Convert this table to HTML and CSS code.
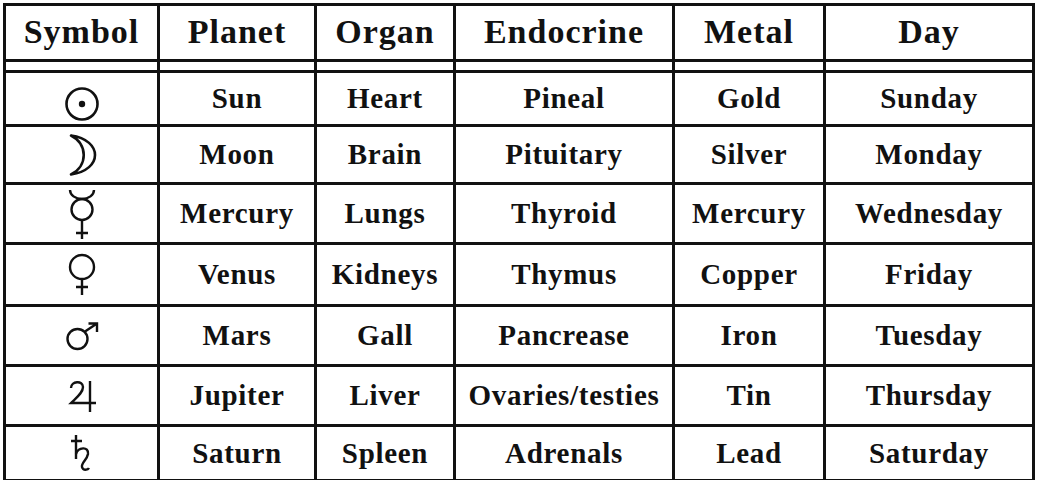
FILE: index.html
```html
<!DOCTYPE html>
<html>
<head>
<meta charset="utf-8">
<link rel="stylesheet" href="styles.css">
</head>
<body>
<table class="grid">
  <colgroup>
    <col class="c1"><col class="c2"><col class="c3"><col class="c4"><col class="c5"><col class="c6">
  </colgroup>
  <thead>
    <tr class="head">
      <th>Symbol</th><th>Planet</th><th>Organ</th><th>Endocrine</th><th>Metal</th><th>Day</th>
    </tr>
    <tr class="gap"><td></td><td></td><td></td><td></td><td></td><td></td></tr>
  </thead>
  <tbody>
    <tr class="r1">
      <td class="sym"><svg class="i-sun" width="36" height="36" viewBox="0 0 36 36"><circle cx="18" cy="18" r="15.5" fill="none" stroke="#111" stroke-width="2.6"/><circle cx="18" cy="18" r="3.2" fill="#111"/></svg></td>
      <td>Sun</td><td>Heart</td><td>Pineal</td><td>Gold</td><td>Sunday</td>
    </tr>
    <tr class="r2">
      <td class="sym"><svg width="30" height="44" viewBox="0 0 30 44"><path d="M4 2.5 C 36 7, 36 37, 4 41.5 C 21 33, 21 11, 4 2.5 Z" fill="none" stroke="#111" stroke-width="2.6" stroke-linejoin="round"/></svg></td>
      <td>Moon</td><td>Brain</td><td>Pituitary</td><td>Silver</td><td>Monday</td>
    </tr>
    <tr class="r3">
      <td class="sym"><svg width="30" height="52" viewBox="0 0 30 52"><g fill="none" stroke="#111" stroke-width="2.4"><path d="M3 2 A 12 9 0 0 0 27 2"/><circle cx="15" cy="21.5" r="10.5"/><path d="M15 32 V51 M9 45 H21"/></g></svg></td>
      <td>Mercury</td><td>Lungs</td><td>Thyroid</td><td>Mercury</td><td>Wednesday</td>
    </tr>
    <tr class="r4">
      <td class="sym"><svg width="30" height="43" viewBox="0 0 30 43"><g fill="none" stroke="#111" stroke-width="2.4"><circle cx="15" cy="14" r="12"/><path d="M15 26 V42 M9 34 H21"/></g></svg></td>
      <td>Venus</td><td>Kidneys</td><td>Thymus</td><td>Copper</td><td>Friday</td>
    </tr>
    <tr class="r5">
      <td class="sym"><svg width="36" height="32" viewBox="0 0 36 32"><g fill="none" stroke="#111" stroke-width="2.4"><circle cx="13.5" cy="19" r="10"/><path d="M21 11.5 L33 3.5 M24.5 3.5 H33 V12"/></g></svg></td>
      <td>Mars</td><td>Gall</td><td>Pancrease</td><td>Iron</td><td>Tuesday</td>
    </tr>
    <tr class="r6">
      <td class="sym"><svg width="32" height="34" viewBox="0 0 32 34"><g fill="none" stroke="#111" stroke-width="2.4"><path d="M5 9 C 5 2, 17 1, 17 8 C 17 14, 10 19, 5 24 H 30"/><path d="M24 2 V33"/></g></svg></td>
      <td>Jupiter</td><td>Liver</td><td>Ovaries/testies</td><td>Tin</td><td>Thursday</td>
    </tr>
    <tr class="r7">
      <td class="sym"><svg width="26" height="40" viewBox="0 0 26 40"><g fill="none" stroke="#111" stroke-width="2.4"><path d="M7 2 V26 M2 8 H13"/><path d="M7 21 C 9 14, 20 13, 19 21 C 18 27, 12 30, 13 34 C 14 38, 19 37, 20 35"/></g></svg></td>
      <td>Saturn</td><td>Spleen</td><td>Adrenals</td><td>Lead</td><td>Saturday</td>
    </tr>
  </tbody>
</table>
</body>
</html>
```
FILE: styles.css
```css
html, body {
  margin: 0;
  padding: 0;
  background: #fff;
}
body {
  padding: 3px 0 0 3px;
}
.grid {
  border-collapse: collapse;
  table-layout: fixed;
  width: 1032px;
  font-family: "Liberation Serif", "Times New Roman", serif;
  font-weight: bold;
  color: #111;
}
.c1 { width: 154px; }
.c2 { width: 157px; }
.c3 { width: 139px; }
.c4 { width: 219px; }
.c5 { width: 151px; }
.c6 { width: 209px; }
.grid th,
.grid td {
  border: 3px solid #111;
  padding: 0;
  text-align: center;
  vertical-align: middle;
  white-space: nowrap;
}
.grid th {
  font-size: 34px;
  letter-spacing: 1px;
  height: 51px;
  padding-bottom: 2px;
}
.grid td {
  font-size: 29px;
  letter-spacing: 0.7px;
}
.gap td {
  height: 8px;
}
.sym svg {
  display: block;
  margin: 0 auto;
}
.i-sun {
  position: relative;
  top: 5px;
}
.r1 td { height: 51px; }
.r2 td { height: 55px; }
.r3 td { height: 57px; }
.r4 td { height: 59px; }
.r5 td { height: 57px; }
.r6 td { height: 57px; }
.r7 td { height: 52px; }
```
